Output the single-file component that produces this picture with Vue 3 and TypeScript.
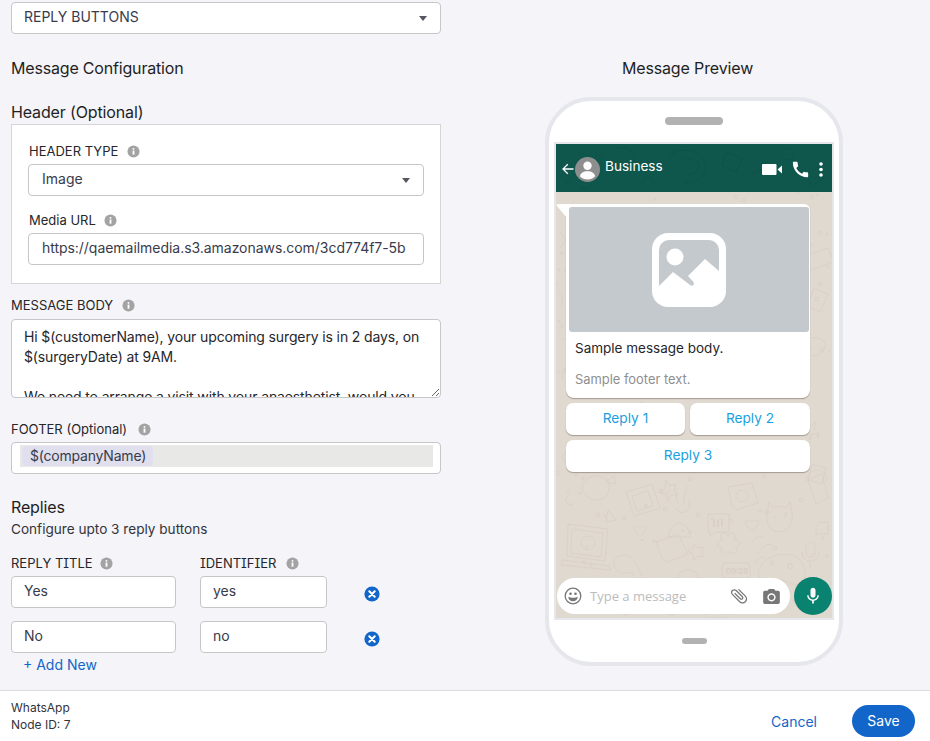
<script setup lang="ts">
import { ref } from 'vue'

type ReplyRow = {
  title: string
  identifier: string
}

const messageType = ref<string>('REPLY BUTTONS')
const headerType = ref<string>('Image')
const mediaUrl = ref<string>('https://qaemailmedia.s3.amazonaws.com/3cd774f7-5b')
const messageBody = ref<string>(
  'Hi $(customerName), your upcoming surgery is in 2 days, on $(surgeryDate) at 9AM.\n\nWe need to arrange a visit with your anaesthetist, would you like to book it now?'
)

const replies = ref<ReplyRow[]>([
  { title: 'Yes', identifier: 'yes' },
  { title: 'No', identifier: 'no' }
])

const removeReply = (i: number) => {
  replies.value.splice(i, 1)
}

const addReply = () => {
  if (replies.value.length >= 3) return
  replies.value.push({ title: '', identifier: '' })
}

// scattered specks for the chat wallpaper
const specks: { x: number; y: number; r: number }[] = []
let seed = 17
for (let i = 0; i < 170; i++) {
  seed = (seed * 137 + 91) % 1009
  const x = seed % 276
  seed = (seed * 137 + 91) % 1009
  const y = seed % 426
  specks.push({ x, y, r: 0.8 + (seed % 3) * 0.5 })
}
</script>

<template>
  <div class="page">
    <div class="main">
      <div class="config">
        <div class="select top-select">
          <span>{{ messageType }}</span>
          <i class="caret"></i>
        </div>

        <h2 class="heading config-title">Message Configuration</h2>
        <h2 class="heading header-title">Header (Optional)</h2>

        <div class="header-box">
          <label class="label">
            HEADER TYPE
            <svg class="info" viewBox="0 0 14 14"><circle cx="7" cy="7" r="6.5" fill="#a3a3a3" /><circle cx="7" cy="4.2" r="1" fill="#fff" /><rect x="6" y="6" width="2" height="4.4" fill="#fff" /></svg>
          </label>
          <div class="select">
            <span>{{ headerType }}</span>
            <i class="caret"></i>
          </div>
          <label class="label media-label">
            Media URL
            <svg class="info" viewBox="0 0 14 14"><circle cx="7" cy="7" r="6.5" fill="#a3a3a3" /><circle cx="7" cy="4.2" r="1" fill="#fff" /><rect x="6" y="6" width="2" height="4.4" fill="#fff" /></svg>
          </label>
          <input v-model="mediaUrl" class="textbox" />
        </div>

        <label class="label body-label">
          MESSAGE BODY
          <svg class="info" viewBox="0 0 14 14"><circle cx="7" cy="7" r="6.5" fill="#a3a3a3" /><circle cx="7" cy="4.2" r="1" fill="#fff" /><rect x="6" y="6" width="2" height="4.4" fill="#fff" /></svg>
        </label>
        <textarea v-model="messageBody" class="body-input"></textarea>

        <label class="label footer-label">
          FOOTER (Optional)
          <svg class="info" viewBox="0 0 14 14"><circle cx="7" cy="7" r="6.5" fill="#a3a3a3" /><circle cx="7" cy="4.2" r="1" fill="#fff" /><rect x="6" y="6" width="2" height="4.4" fill="#fff" /></svg>
        </label>
        <div class="token-box">
          <div class="token-line"><span class="token">$(companyName)</span></div>
        </div>

        <h2 class="heading replies-title">Replies</h2>
        <p class="hint">Configure upto 3 reply buttons</p>

        <div class="reply-labels">
          <label class="label title-col">
            REPLY TITLE
            <svg class="info" viewBox="0 0 14 14"><circle cx="7" cy="7" r="6.5" fill="#a3a3a3" /><circle cx="7" cy="4.2" r="1" fill="#fff" /><rect x="6" y="6" width="2" height="4.4" fill="#fff" /></svg>
          </label>
          <label class="label id-col">
            IDENTIFIER
            <svg class="info" viewBox="0 0 14 14"><circle cx="7" cy="7" r="6.5" fill="#a3a3a3" /><circle cx="7" cy="4.2" r="1" fill="#fff" /><rect x="6" y="6" width="2" height="4.4" fill="#fff" /></svg>
          </label>
        </div>
        <div v-for="(reply, index) in replies" :key="index" class="reply-row">
          <input v-model="reply.title" class="textbox title-col" />
          <input v-model="reply.identifier" class="textbox id-col" />
          <button class="remove" @click="removeReply(index)">
            <svg viewBox="0 0 16 16" width="16" height="16">
              <circle cx="8" cy="8" r="7.6" fill="#1266c9" />
              <path d="M5.3 5.3l5.4 5.4M10.7 5.3l-5.4 5.4" stroke="#fff" stroke-width="2.1" stroke-linecap="round" />
            </svg>
          </button>
        </div>
        <a class="add-new" @click="addReply">+ Add New</a>
      </div>

      <div class="preview">
        <h2 class="heading preview-title">Message Preview</h2>
        <div class="phone">
          <div class="speaker"></div>
          <div class="screen">
            <div class="wa-header">
              <svg class="wa-doodles" viewBox="0 0 276 48">
                <g fill="none" stroke="#0d5147" stroke-width="0.8">
                  <path d="M10 40c6-12 18-14 24-6s-4 14-10 8" />
                  <path d="M58 6c10-6 22 0 20 10s-16 10-20 2" />
                  <path d="M112 12c14-10 30-6 36 6s-8 24-20 20" />
                  <path d="M126 18c6-6 14-4 16 2s-4 12-10 10" />
                  <circle cx="92" cy="38" r="5" />
                  <path d="M170 8l16 6-6 14-14-6z" />
                  <path d="M196 32c6-8 18-8 22 0" />
                  <circle cx="232" cy="10" r="6" />
                  <path d="M250 30l14-8 4 12-12 8z" />
                  <path d="M40 8l6 6-8 4z" />
                </g>
              </svg>
              <svg class="back" viewBox="0 0 12 12" width="12" height="12">
                <path d="M11.5 6H1.2M5.8 1.2L1 6l4.8 4.8" fill="none" stroke="#fff" stroke-width="1.3" />
              </svg>
              <svg class="avatar" viewBox="0 0 25 25" width="25" height="25">
                <circle cx="12.5" cy="12.5" r="12.5" fill="#8e8e8e" />
                <circle cx="12.5" cy="8.8" r="4.2" fill="#fff" />
                <path d="M5 19.6c0-3.4 3.3-5.4 7.5-5.4s7.5 2 7.5 5.4c-2 1.9-4.6 3-7.5 3s-5.5-1.1-7.5-3z" fill="#fff" />
              </svg>
              <span class="wa-name">Business</span>
              <svg class="video" viewBox="0 0 20 11" width="20" height="11">
                <rect width="14.5" height="11" rx="1" fill="#fff" />
                <path d="M15.5 5.5L20 1.5v8z" fill="#fff" />
              </svg>
              <svg class="call" viewBox="2 2 20 20" width="17" height="17">
                <path fill="#fff" d="M20.01 15.38c-1.23 0-2.42-.2-3.53-.56-.35-.12-.74-.03-1.01.24l-1.57 1.97c-2.83-1.35-5.48-3.9-6.89-6.83l1.95-1.66c.27-.28.35-.67.24-1.02-.37-1.11-.56-2.3-.56-3.53 0-.54-.45-.99-.99-.99H4.19C3.65 3 3 3.24 3 3.99 3 13.28 10.73 21 20.01 21c.71 0 .99-.63.99-1.18v-3.45c0-.54-.45-.99-.99-.99z" />
              </svg>
              <svg class="dots" viewBox="0 0 4 15" width="4" height="15">
                <circle cx="2" cy="2" r="1.8" fill="#fff" />
                <circle cx="2" cy="7.5" r="1.8" fill="#fff" />
                <circle cx="2" cy="13" r="1.8" fill="#fff" />
              </svg>
            </div>

            <div class="chat">
              <svg class="wallpaper" viewBox="0 0 276 426">
                <g fill="none" stroke="#d7cfc5" stroke-width="0.8">
                  <circle v-for="(s, i) in specks" :key="i" :cx="s.x" :cy="s.y" :r="s.r" />
                  <!-- laptop -->
                  <path d="M12 332l40 5-3 32-38-5z" />
                  <path d="M16 337l31 4-2 24-30-4z" />
                  <path d="M7 368l46 6 2 4-50-5z" />
                  <circle cx="32" cy="351" r="7" />
                  <!-- picture frame -->
                  <path d="M70 300l26-8 8 24-26 8z" />
                  <path d="M76 304l16-5 5 15-16 5z" />
                  <!-- hand and face -->
                  <path d="M122 312c-3-8-2-14 0-16M128 312c0-8 2-14 3-18M120 316c2 6 10 6 14 0l-1-8" />
                  <path d="M112 345c2-10 8-14 12-14s10 6 10 14z" />
                  <!-- speech bubble -->
                  <path d="M152 322h21v18h-14l-5 5v-5h-2z" />
                  <path d="M158 327v8M162 327v8M166 327v8" stroke-width="1.6" />
                  <!-- chat square with emoji -->
                  <path d="M172 295l24-4 6 20-22 7-4-4z" />
                  <circle cx="186" cy="304" r="6" />
                  <!-- cat -->
                  <path d="M213 310l4 6c4-2 9-2 13 0l4-6 2 12c2 8-4 18-13 18s-14-10-12-18z" />
                  <path d="M218 325h1M228 325h1" stroke-width="1.5" />
                  <!-- ice cream -->
                  <path d="M252 288l14-6 6 24-12 6zM250 290c0-8 6-12 12-12s10 6 8 12" />
                  <!-- clock -->
                  <rect x="166" y="371" width="28" height="15" rx="3" />
                  <!-- gamepad -->
                  <path d="M206 372c6-10 30-14 38-4s6 22-2 24-14-6-20-4-14 4-18-2 0-10 2-14z" />
                  <circle cx="234" cy="374" r="2.5" />
                  <!-- mic -->
                  <rect x="250" y="350" width="9" height="15" rx="4.5" />
                  <path d="M246 360c0 12 17 12 17 0M254 370v6" />
                  <!-- dinosaur -->
                  <path d="M58 372c0-8 8-10 14-8s10 10 14 20l8 16c-6-2-14-10-18-20-4 2-18 2-18-8z" />
                  <!-- book -->
                  <path d="M100 350l22-8 10 20-20 8-6-4z" />
                  <!-- car -->
                  <path d="M122 384c2-8 18-8 20 0l2 10h-24z" />
                  <!-- clover -->
                  <path d="M166 348c-4-6 4-10 6-4 2-6 10-2 6 4 6-2 8 6 2 7 4 5-4 9-7 4-2 6-10 3-7-3-6 1-6-7 0-8z" />
                  <!-- dog, star, heart, hand in the band under the replies -->
                  <path d="M30 288c6-6 18-6 22 2s-2 18-10 18-16-6-16-12 2-6 4-8z" />
                  <path d="M14 302c-4 2-6 8-2 10s6 0 8-2M52 318l8 10-10 2z" />
                  <path d="M138 352l4 4 6-1-3 5 3 5-6-1-4 4-1-6-5-3 5-3z" />
                  <path d="M196 330c3-4 8-1 6 3l-6 6-6-6c-2-4 3-7 6-3z" />
                  <path d="M84 336c3-4 8-1 6 3l-6 6-6-6c-2-4 3-7 6-3z" />
                  <path d="M196 350c4-6 10-8 12-4M202 362c4-8 12-12 16-8M200 372c0-6 4-8 8-6" />
                  <path d="M50 290l8-6 2 8zM110 288l4 6 6-2-2 6 4 5-7 0-3 6-2-7-6-1 5-4z" />
                  <path d="M264 330h8v12h-12v-8z" />
                  <!-- upper right doodles -->
                  <path d="M258 96l14 6-8 18-12-6z" />
                  <path d="M248 64l24-8 6 14-24 8z" />
                  <path d="M250 150c4-6 14-6 18 0s-4 14-10 14-12-8-8-14z" />
                  <path d="M248 230l6 4 6-4-2 7 5 5-7 0-2 6-3-6-7 0 5-5z" />
                  <path d="M10 260c4-6 10-2 8 4l-8 8-4-8z" />
                  <path d="M256 272l14 4-4 16-14-4z" />
                  <path d="M4 40l6 8-6 8M2 100c4 4 6 10 2 14M2 180c4-2 6 4 4 8M3 130l4 4-4 4" />
                  <path d="M18 418c4-6 18-6 22 0M70 410l10 8-12 6zM150 412h22v14h-22z" />
                </g>
                <text x="170" y="382" class="wall-clock">09:28</text>
              </svg>

              <div class="bubble">
                <svg class="tail" viewBox="0 0 11 14" width="11" height="14"><path d="M11 0H2Q0 0 1 2l10 12z" fill="#fff" /></svg>
                <div class="bubble-image">
                  <svg viewBox="0 0 74 74" width="74" height="74">
                    <rect width="74" height="74" rx="16" fill="#fff" />
                    <path d="M7 17a10 10 0 0 1 10-10h40a10 10 0 0 1 10 10v21L53 26 36 43l5.5 6q1 3-1 3.5-2 .5-3-1L21 39 7 53z" fill="#c4c9cd" />
                    <circle cx="23" cy="24" r="8.5" fill="#fff" />
                  </svg>
                </div>
                <p class="bubble-body">Sample message body.</p>
                <p class="bubble-footer">Sample footer text.</p>
              </div>
              <div class="wa-replies">
                <div class="wa-reply">Reply 1</div>
                <div class="wa-reply">Reply 2</div>
                <div class="wa-reply wide">Reply 3</div>
              </div>

              <div class="composer">
                <div class="pill">
                  <svg class="emoji" viewBox="0 0 18 18" width="18" height="18">
                    <circle cx="9" cy="9" r="7.8" fill="none" stroke="#777" stroke-width="1.3" />
                    <circle cx="6.5" cy="6.8" r="1.3" fill="#777" />
                    <circle cx="11.5" cy="6.8" r="1.3" fill="#777" />
                    <path d="M4.3 9.8c1.5.8 3 1 4.7 1s3.2-.2 4.7-1c0 2.8-2.1 4.5-4.7 4.5s-4.7-1.7-4.7-4.5z" fill="#777" />
                  </svg>
                  <span class="placeholder">Type a message</span>
                  <svg class="clip" viewBox="0 0 24 24" width="20" height="20">
                    <path transform="rotate(-45 12 12)" fill="#777" d="M16.5 6v11.5c0 2.21-1.79 4-4 4s-4-1.79-4-4V5c0-1.38 1.12-2.5 2.5-2.5s2.5 1.12 2.5 2.5v10.5c0 .55-.45 1-1 1s-1-.45-1-1V6H10v9.5c0 1.38 1.12 2.5 2.5 2.5s2.5-1.12 2.5-2.5V5c0-2.21-1.79-4-4-4S7 2.79 7 5v12.5c0 3.04 2.46 5.5 5.5 5.5s5.5-2.46 5.5-5.5V6h-1.5z" />
                  </svg>
                  <svg class="camera" viewBox="2 2 20 18" width="17" height="15">
                    <circle cx="12" cy="12" r="3.2" fill="#777" />
                    <path fill="#777" d="M9 2 7.17 4H4c-1.1 0-2 .9-2 2v12c0 1.1.9 2 2 2h16c1.1 0 2-.9 2-2V6c0-1.1-.9-2-2-2h-3.17L15 2H9zm3 15c-2.76 0-5-2.24-5-5s2.24-5 5-5 5 2.24 5 5-2.24 5-5 5z" />
                  </svg>
                </div>
                <div class="mic">
                  <svg viewBox="0 0 24 24" width="20" height="20">
                    <path fill="#fff" d="M12 14c1.66 0 3-1.34 3-3V5c0-1.66-1.34-3-3-3S9 3.34 9 5v6c0 1.66 1.34 3 3 3zm5.3-3c0 3-2.54 5.1-5.3 5.1S6.7 14 6.7 11H5c0 3.41 2.72 6.23 6 6.72V21h2v-3.28c3.28-.48 6-3.3 6-6.72h-1.7z" />
                  </svg>
                </div>
              </div>
            </div>
          </div>
          <div class="home"></div>
        </div>
      </div>
    </div>

    <div class="bottom-bar">
      <div class="node-info">
        <div>WhatsApp</div>
        <div>Node ID: 7</div>
      </div>
      <a class="cancel">Cancel</a>
      <button class="save">Save</button>
    </div>
  </div>
</template>

<style>
html,
body {
  margin: 0;
  background: #f4f4f9;
}
</style>

<style scoped>
.page {
  width: 930px;
  height: 741px;
  overflow: hidden;
  display: flex;
  flex-direction: column;
  background: #f4f4f9;
  font-family: Inter, 'Liberation Sans', sans-serif;
  color: #1f1f24;
}
.main {
  flex: 1;
  display: flex;
  min-height: 0;
}
.config {
  width: 430px;
  margin-left: 11px;
  padding-top: 2px;
  box-sizing: border-box;
}
.select,
.textbox {
  box-sizing: border-box;
  height: 32px;
  background: #fff;
  border: 1px solid #c6c6c9;
  border-radius: 4px;
  padding: 0 12px;
  font: 14px Inter, 'Liberation Sans', sans-serif;
  color: #393b4b;
  outline: none;
}
.select {
  display: flex;
  align-items: center;
  justify-content: space-between;
  padding-bottom: 0;
}
.select span {
  margin-bottom: 3px;
}
.textbox {
  display: block;
  width: 100%;
  padding-bottom: 4px;
  letter-spacing: -0.04px;
}
.header-box .select,
.header-box .textbox {
  padding-left: 13px;
}
.caret {
  width: 0;
  height: 0;
  margin-right: 1px;
  border-left: 4px solid transparent;
  border-right: 4px solid transparent;
  border-top: 5px solid #55565e;
}
.heading {
  margin: 0;
  font-size: 16px;
  font-weight: 400;
  line-height: 20px;
  letter-spacing: -0.14px;
}
.config-title {
  margin-top: 24px;
  letter-spacing: -0.18px;
}
.header-title {
  margin-top: 24px;
}
.header-box {
  box-sizing: border-box;
  height: 160px;
  margin-top: 2px;
  padding: 18px 16px 0;
  background: #fff;
  border: 1px solid #d5d5d8;
}
.label {
  display: flex;
  align-items: center;
  height: 16px;
  font-size: 13px;
  line-height: 16px;
  color: #26262b;
  font-feature-settings: 'cv08' 1;
}
.header-box .label {
  padding-left: 1px;
}
.info {
  width: 13px;
  height: 13px;
  margin-left: 9px;
}
.header-box .select {
  margin-top: 5px;
}
.media-label {
  margin-top: 16px;
  margin-bottom: 5px;
}
.media-label .info {
  margin-left: 8px;
}
.body-label {
  margin-top: 13px;
}
.body-input {
  display: block;
  box-sizing: border-box;
  width: 100%;
  height: 79px;
  margin-top: 6px;
  padding: 7px 12px;
  background: #fff;
  border: 1px solid #c6c6c9;
  border-radius: 4px;
  font: 14px/20px Inter, 'Liberation Sans', sans-serif;
  letter-spacing: -0.13px;
  color: #26262b;
  overflow: hidden;
  resize: vertical;
  outline: none;
}
.footer-label {
  margin-top: 23px;
}
.footer-label .info {
  margin-left: 11px;
}
.token-box {
  box-sizing: border-box;
  height: 32px;
  margin-top: 5px;
  padding: 2px 7px 0 8px;
  background: #fff;
  border: 1px solid #c6c6c9;
  border-radius: 4px;
}
.token-line {
  height: 22px;
  background: #e8e8e6;
  padding-left: 2px;
}
.token {
  display: inline-block;
  height: 20px;
  padding: 0 7px 0 8px;
  background: #dfdfee;
  border-radius: 4px;
  font-size: 14px;
  line-height: 20px;
  letter-spacing: -0.2px;
  color: #393b4b;
}
.replies-title {
  margin-top: 23px;
}
.hint {
  margin: 3px 0 0;
  font-size: 13.6px;
  line-height: 18px;
  color: #33333a;
}
.reply-labels {
  display: flex;
  gap: 24px;
  margin-top: 17px;
}
.reply-labels .title-col .info {
  margin-left: 7px;
}
.reply-labels .id-col .info {
  margin-left: 10px;
}
.reply-row {
  display: flex;
  align-items: center;
  gap: 24px;
  margin-top: 5px;
  margin-bottom: 13px;
}
.reply-row + .reply-row {
  margin-top: 0;
  margin-bottom: 0;
}
.title-col {
  width: 165px;
}
.id-col {
  width: 127px;
}
.remove {
  display: flex;
  padding: 0;
  margin: 4px 0 0 13px;
  background: none;
  border: none;
}
.add-new {
  display: block;
  margin: 3px 0 0 12px;
  font-size: 14px;
  line-height: 17px;
  color: #1266c9;
}
.preview {
  flex: 1;
  margin-left: 4px;
  display: flex;
  flex-direction: column;
  align-items: center;
  padding-top: 58px;
}
.preview-title {
  margin-bottom: 19px;
}
.phone {
  box-sizing: border-box;
  width: 298px;
  height: 569px;
  margin-left: 13px;
  padding: 16px 5px 0;
  display: flex;
  flex-direction: column;
  align-items: center;
  background: #fff;
  border: 4px solid #e6e7ec;
  border-radius: 46px;
}
.speaker {
  width: 58px;
  height: 8px;
  margin-bottom: 17px;
  border-radius: 4px;
  background: #b2b2b2;
}
.screen {
  box-sizing: border-box;
  width: 280px;
  height: 478px;
  border: 2px solid #e6e7ec;
  display: flex;
  flex-direction: column;
}
.wa-header {
  position: relative;
  height: 48px;
  flex: none;
  display: flex;
  align-items: center;
  padding: 0 9px 0 6px;
  background: #0f574d;
  overflow: hidden;
}
.wa-doodles {
  position: absolute;
  inset: 0;
  width: 100%;
  height: 100%;
}
.back,
.avatar,
.wa-name,
.video,
.call,
.dots {
  position: relative;
}
.back {
  margin-top: 2px;
}
.avatar {
  margin: 2px 0 0 1px;
}
.wa-name {
  margin: -5px auto 0 5px;
  font-size: 13.6px;
  color: #fff;
}
.video {
  margin-top: 2px;
}
.call {
  margin: 2px 0 0 10px;
}
.dots {
  margin: 2px 0 0 10px;
}
.chat {
  position: relative;
  flex: 1;
  display: flex;
  flex-direction: column;
  background: #e0d9d0;
  overflow: hidden;
}
.wallpaper {
  position: absolute;
  inset: 0;
  width: 100%;
  height: 100%;
}
.wall-clock {
  font-size: 8px;
  fill: #d5cdc2;
}
.bubble {
  position: relative;
  box-sizing: border-box;
  width: 244px;
  height: 194px;
  margin: 12px 0 0 10px;
  padding: 3px 1px 3px 3px;
  background: #fff;
  border-radius: 0 6px 8px 8px;
  box-shadow: 0 1px 1px rgba(90, 80, 70, 0.45);
}
.tail {
  position: absolute;
  left: -10px;
  top: 0;
}
.bubble-image {
  height: 125px;
  display: flex;
  align-items: center;
  justify-content: center;
  background: #c4c9cd;
  border-radius: 3px;
}
.bubble-body {
  margin: 8px 0 0 6px;
  font-size: 13.5px;
  line-height: 16px;
  color: #26262b;
}
.bubble-footer {
  margin: 16px 0 0 6px;
  font-size: 12.9px;
  line-height: 16px;
  color: #8f8f8f;
}
.wa-replies {
  position: relative;
  width: 244px;
  margin: 5px 0 0 10px;
  display: grid;
  grid-template-columns: 119px 120px;
  gap: 5px;
}
.wa-reply {
  box-sizing: border-box;
  height: 32px;
  padding-bottom: 2px;
  display: flex;
  align-items: center;
  justify-content: center;
  background: #fff;
  border-radius: 7px;
  box-shadow: 0 1px 1px rgba(90, 80, 70, 0.45);
  font-size: 13.7px;
  color: #1a9fe0;
}
.wide {
  grid-column: 1 / 3;
}
.composer {
  position: relative;
  margin-top: auto;
  margin-bottom: 3px;
  display: flex;
  align-items: center;
  padding-left: 1px;
}
.pill {
  box-sizing: border-box;
  width: 233px;
  height: 36px;
  display: flex;
  align-items: center;
  padding: 0 10px 0 7px;
  background: #fff;
  border-radius: 18px;
}
.placeholder {
  margin: 0 auto 0 8px;
  font-family: 'Open Sans', sans-serif;
  font-size: 13px;
  color: #bcbcbc;
}
.camera {
  margin-left: 14px;
}
.mic {
  width: 38px;
  height: 38px;
  margin-left: 4px;
  display: flex;
  align-items: center;
  justify-content: center;
  border-radius: 50%;
  background: #0a8270;
}
.home {
  width: 25px;
  height: 6px;
  margin-top: 18px;
  border-radius: 3px;
  background: #b2b2b2;
}
.bottom-bar {
  box-sizing: border-box;
  height: 51px;
  flex: none;
  display: flex;
  align-items: center;
  padding: 10px 15px 0 11px;
  background: #fff;
  border-top: 1px solid #dcdcdf;
}
.node-info {
  margin-top: -10px;
  margin-right: auto;
  font-size: 12px;
  line-height: 17px;
  color: #33333a;
}
.cancel {
  margin-right: 35px;
  font-size: 14px;
  color: #1266c9;
}
.save {
  width: 63px;
  height: 32px;
  padding: 0 0 2px;
  border: none;
  border-radius: 16px;
  background: #1266c9;
  font: 14px Inter, 'Liberation Sans', sans-serif;
  color: #fff;
}
</style>
